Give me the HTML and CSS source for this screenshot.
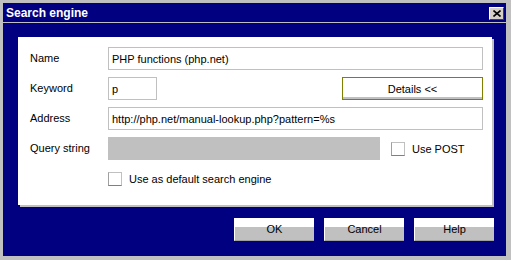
FILE: index.html
```html
<!DOCTYPE html>
<html lang="en">
<head>
  <meta charset="UTF-8">
  <title>Search engine</title>
  <link rel="stylesheet" href="styles.css">
</head>
<body>
  <div class="window">
    <div class="titlebar">
      <span class="title">Search engine</span>
      <button class="close-btn" aria-label="Close">
        <svg width="8" height="7" viewBox="0 0 8 7"><path d="M0.5 0.5 L7.5 6.5 M7.5 0.5 L0.5 6.5" stroke="#000" stroke-width="1.6" fill="none"/></svg>
      </button>
    </div>
    <div class="content">
      <div class="panel">
        <label class="label" for="f_name">Name</label>
        <input class="field" id="f_name" type="text" value="PHP functions (php.net)">

        <label class="label" for="f_keyword">Keyword</label>
        <div class="row">
          <input class="field keyword" id="f_keyword" type="text" value="p">
          <button class="details-btn">Details &lt;&lt;</button>
        </div>

        <label class="label" for="f_address">Address</label>
        <input class="field" id="f_address" type="text" value="http://php.net/manual-lookup.php?pattern=%s">

        <span class="label">Query string</span>
        <div class="row">
          <div class="field disabled"></div>
          <span class="check"></span>
          <span class="check-label">Use POST</span>
        </div>

        <span></span>
        <div class="row">
          <span class="check"></span>
          <span class="check-label">Use as default search engine</span>
        </div>
      </div>
      <div class="buttons">
        <button class="btn">OK</button>
        <button class="btn">Cancel</button>
        <button class="btn">Help</button>
      </div>
    </div>
  </div>
</body>
</html>
```

FILE: styles.css
```css
body {
  margin: 0;
  background: #c0c0c0;
  font-family: 'Liberation Sans', Arial, sans-serif;
  font-size: 11px;
  color: #000;
}
.window {
  width: 511px;
  height: 260px;
  box-sizing: border-box;
  border-style: solid;
  border-color: #c0c0c0;
  border-width: 3px 5px 4px 3px;
  background: #000080;
  display: flex;
  flex-direction: column;
}
.titlebar {
  height: 19px;
  border-bottom: 1px solid #c0c0c0;
  display: flex;
  align-items: center;
  justify-content: space-between;
  padding: 0 2px 0 3px;
}
.title {
  color: #fff;
  font-weight: 700;
  font-size: 12px;
}
.close-btn {
  width: 15px;
  height: 13px;
  margin-top: 2px;
  padding: 0;
  border: 1px solid;
  border-color: #fff #404040 #404040 #fff;
  background: #d4d0c8;
  display: flex;
  align-items: center;
  justify-content: center;
}
.content {
  padding: 14px 12px 0 15px;
}
.panel {
  background: #fff;
  box-shadow: 2px 2px 0 #c0c0c0;
  margin-right: 2px;
  padding: 10px 9px 15px 12px;
  display: grid;
  grid-template-columns: 78px 1fr;
  grid-auto-rows: 23px;
  row-gap: 7px;
  align-items: center;
}
.label {
  line-height: 23px;
}
.row {
  display: flex;
  align-items: center;
  height: 23px;
}
.field {
  height: 23px;
  box-sizing: border-box;
  border: 1px solid #c0c0c0;
  padding: 0 3px;
  font: inherit;
  color: #000;
  background: #fff;
  width: 100%;
  outline: none;
}
.keyword {
  width: 49px;
}
.disabled {
  width: 272px;
  flex: none;
  background: #c0c0c0;
}
.details-btn {
  margin-left: auto;
  width: 141px;
  height: 23px;
  border: 1px solid #808000;
  background: linear-gradient(to top, #c0c0c0 2px, #fff 2px);
  font: inherit;
  color: #000;
  padding: 0;
}
.check {
  width: 14px;
  height: 14px;
  box-sizing: border-box;
  border: 1px solid #c0c0c0;
  border-bottom-color: #808080;
  border-left-color: #a0a0a0;
  flex: none;
}
.disabled + .check {
  margin-left: 11px;
}
.check-label {
  margin-left: 7px;
}
.buttons {
  display: flex;
  justify-content: flex-end;
  gap: 10px;
  margin-top: 13px;
}
.btn {
  width: 80px;
  height: 23px;
  padding: 0;
  border: none;
  border-left: 1px solid #fff;
  border-bottom: 1px solid #a0a0a0;
  background: linear-gradient(#fff 0, #fff 9px, #c0c0c0 9px);
  font: inherit;
  color: #000;
}
```
